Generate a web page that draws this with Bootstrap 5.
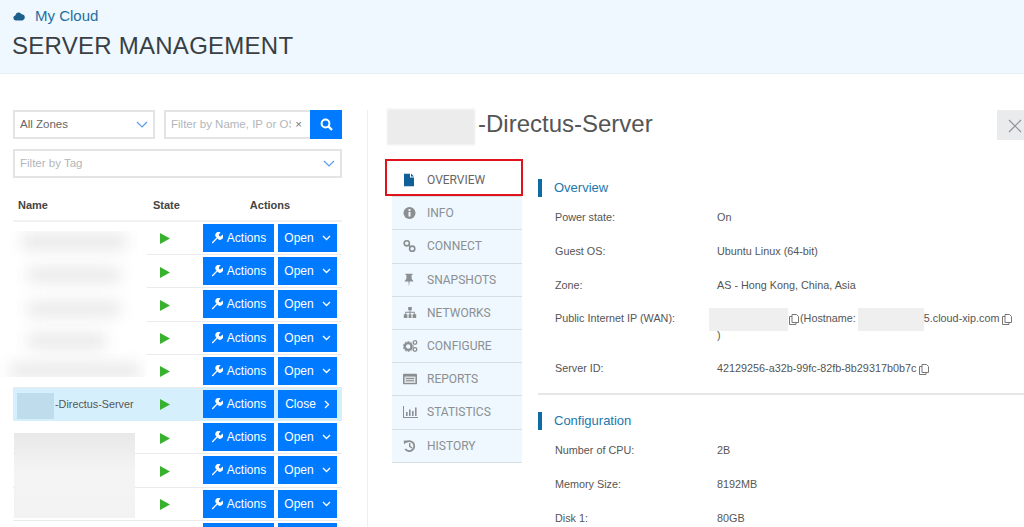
<!DOCTYPE html>
<html lang="en">
<head>
<meta charset="utf-8">
<title>Server Management</title>
<link href="https://cdn.jsdelivr.net/npm/bootstrap@5.3.0/dist/css/bootstrap.min.css" rel="stylesheet">
<style>
html,body{height:527px;overflow:hidden}
body{font-family:"Liberation Sans",Arial,sans-serif;color:#555;font-size:12px;background:#fff}
.hdr{height:74px;background:#eef8fe;border-bottom:1px solid #e6eef2;padding:7px 12px 0}
.hdr-link{color:#1f6fa3;font-size:15px;line-height:18px;gap:10px;padding-left:1px}
.hdr-title{font-size:24px;line-height:30px;margin:6px 0 0;color:#3a3f44;letter-spacing:.26px;font-weight:400}
.left-pane{width:329px;margin:36px 25px 0 13px;flex:none;position:relative}
.right-pane{flex:1;border-left:1px solid #eceeef;margin-top:36px;padding-left:24px;position:relative;min-width:0;height:420px}
.fld{height:29px;border:2px solid #e2e4e6;border-radius:0;font-size:11.5px;color:#666;padding:0 5px;background:#fff}
.fld.faint{color:#b2b6ba}
.zone-fld{width:142px}
.search-fld{width:146px;border-right:0;overflow:hidden;white-space:nowrap;padding-right:8px}
.search-text{overflow:hidden;flex:1}
.search-btn{width:32px;height:29px;border-radius:0;padding:0;background:#007bff;border:0}
.tag-fld{margin-top:10px;height:29px}
.tbl-head{height:35px;margin-top:9px;border-bottom:2px solid #f0f1f2;font-weight:700;font-size:11px;color:#444;padding:4px 5px 0 5px}
.tbl-head span:nth-child(1){width:135px}
.tbl-head span:nth-child(2){width:50px}
.tbl-head span:nth-child(3){width:134px;text-align:center}
.srv-row{height:33.2px;border-bottom:1px solid #e8eaeb;padding-right:5px}
.srv-row.on{background:#d5effd;border-bottom-color:#d5effd}
.srv-name{width:140px;padding-left:42px;font-size:10.8px;color:#555}
.state-cell{width:50px;padding-left:7px}
.act-btn,.open-btn{height:28px;border-radius:0;padding:0;background:#007bff;border:0;color:#fff;font-size:12px;font-family:"Liberation Sans",sans-serif;gap:4px}
.act-btn{width:71px;margin-right:4px}
.open-btn{width:59px;gap:8px}
.smudge{position:absolute;background:#fff;overflow:hidden}
.smudge i{position:absolute;display:block;background:#e2e2e2;filter:blur(8px)}
.smudge-a{left:-13px;top:121px;width:147px;height:146px}
.smudge-b{left:1px;top:323px;width:121px;height:85px;background:linear-gradient(#e8e8e8,#f4f4f4 45%,#f2f2f2)}
.smudge-c{left:4px;top:283px;width:37px;height:26px;background:#bfdcec}
.srv-title{font-size:24px;line-height:28px;height:28px;color:#555;margin:0 0 26px;padding-left:86px;font-weight:400}
.blur-title{left:-5px;top:-1px;width:88px;height:36px;background:#ececec;filter:blur(1px)}
.x-btn{position:absolute;right:-27px;top:0;width:54px;height:30px;background:#e9ebec;border:0;border-radius:0;padding:0 0 0 11px;text-align:left}
.side-list{width:130px;flex:none;margin-right:16px}
.side-item{height:33.2px;background:#eef8fe;border:0;border-bottom:1px solid #d8dfe3;border-radius:0;padding:0 0 0 35px;color:#8c8f92;font-size:12px;font-family:Roboto,"Liberation Sans",sans-serif;position:relative}
.side-item.active-item{background:#fff;color:#666}
.side-item svg{position:absolute;left:11px;top:50%;transform:translateY(-50%)}
.red-frame{position:absolute;left:-7px;top:-5px;width:138px;height:37px;border:2px solid #e0121c;pointer-events:none}
.sect-head{height:18px;border-left:4px solid #0f6ba5;padding-left:12px;color:#2178ad;font-size:13px;line-height:18px}
.info-row{display:flex;font-size:10.8px;color:#555;height:33.8px;padding-top:9px;line-height:17px}
.info-row.tall-row{height:50px}
.info-row>div:first-child{width:179px;padding-left:17px;flex:none}
.val{min-width:0;width:307px;white-space:nowrap}
.info-sep{border-top:2px solid #e4e6e7;margin:8px 0 17px}
.blank{display:inline-block;vertical-align:middle;background:#efefef;height:23px;margin-top:-4px;margin-bottom:-4px}
.blank-ip{width:79px;margin-left:-8px}
.blank-host{width:66px;margin-left:2px;margin-right:0}
.copy-a{margin-left:1px;margin-right:1px}
.copy-b{margin-left:3px}
.first-sect{margin-top:15px}
.sect-rows{padding-top:3px}
</style>
</head>
<body>
<header class="hdr">
  <div class="d-flex align-items-center hdr-link">
    <svg width="12" height="10" viewBox="0 0 12 10"><path fill="#1b5f8c" d="M3 9.5A2.6 2.6 0 0 1 2.3 4.4 3.4 3.4 0 0 1 8.6 3.2 3.2 3.2 0 0 1 9.4 9.5z"/></svg>
    <span>My Cloud</span>
  </div>
  <h1 class="hdr-title">SERVER MANAGEMENT</h1>
</header>
<main class="d-flex">
  <section class="left-pane">
    <div class="d-flex justify-content-between">
      <div class="fld zone-fld d-flex align-items-center justify-content-between">All Zones
        <svg width="12" height="7" viewBox="0 0 12 7"><path d="M1 1l5 5 5-5" fill="none" stroke="#5a9bf0" stroke-width="1.2"/></svg>
      </div>
      <div class="d-flex">
        <div class="fld faint search-fld d-flex align-items-center"><span class="search-text">Filter by Name, IP or OS</span><span class="text-secondary ms-1">×</span></div>
        <button class="btn search-btn d-flex align-items-center justify-content-center" aria-label="Search">
          <svg width="13" height="13" viewBox="0 0 13 13"><circle cx="5.5" cy="5.5" r="3.9" fill="none" stroke="#fff" stroke-width="2"/><path d="M8.5 8.5l3.5 3.5" stroke="#fff" stroke-width="2.4"/></svg>
        </button>
      </div>
    </div>
    <div class="fld faint tag-fld d-flex align-items-center justify-content-between">Filter by Tag
      <svg width="12" height="7" viewBox="0 0 12 7"><path d="M1 1l5 5 5-5" fill="none" stroke="#5a9bf0" stroke-width="1.2"/></svg>
    </div>
    <div class="tbl-head d-flex align-items-center"><span>Name</span><span>State</span><span>Actions</span></div>

    <div class="srv-row d-flex align-items-center"><div class="srv-name"></div><div class="state-cell"><svg width="10" height="11" viewBox="0 0 10 11"><path fill="#38b12f" d="M0 0l10 5.5L0 11z"/></svg></div><button class="btn act-btn d-inline-flex align-items-center justify-content-center"><svg width="12" height="12" viewBox="0 0 12 12"><path fill="#fff" d="M1 10.2 5.6 5.6A3.2 3.2 0 0 1 9.6.6L7.8 2.5l.3 1.6 1.6.3L11.4 2.6a3.2 3.2 0 0 1-5 4L1.9 11.2a.7.7 0 0 1-.9-1z"/></svg>Actions</button><button class="btn open-btn d-inline-flex align-items-center justify-content-center">Open<svg width="9" height="6" viewBox="0 0 9 6"><path d="M1 1l3.5 3.5L8 1" fill="none" stroke="#fff" stroke-width="1.3"/></svg></button></div>
    <div class="srv-row d-flex align-items-center"><div class="srv-name"></div><div class="state-cell"><svg width="10" height="11" viewBox="0 0 10 11"><path fill="#38b12f" d="M0 0l10 5.5L0 11z"/></svg></div><button class="btn act-btn d-inline-flex align-items-center justify-content-center"><svg width="12" height="12" viewBox="0 0 12 12"><path fill="#fff" d="M1 10.2 5.6 5.6A3.2 3.2 0 0 1 9.6.6L7.8 2.5l.3 1.6 1.6.3L11.4 2.6a3.2 3.2 0 0 1-5 4L1.9 11.2a.7.7 0 0 1-.9-1z"/></svg>Actions</button><button class="btn open-btn d-inline-flex align-items-center justify-content-center">Open<svg width="9" height="6" viewBox="0 0 9 6"><path d="M1 1l3.5 3.5L8 1" fill="none" stroke="#fff" stroke-width="1.3"/></svg></button></div>
    <div class="srv-row d-flex align-items-center"><div class="srv-name"></div><div class="state-cell"><svg width="10" height="11" viewBox="0 0 10 11"><path fill="#38b12f" d="M0 0l10 5.5L0 11z"/></svg></div><button class="btn act-btn d-inline-flex align-items-center justify-content-center"><svg width="12" height="12" viewBox="0 0 12 12"><path fill="#fff" d="M1 10.2 5.6 5.6A3.2 3.2 0 0 1 9.6.6L7.8 2.5l.3 1.6 1.6.3L11.4 2.6a3.2 3.2 0 0 1-5 4L1.9 11.2a.7.7 0 0 1-.9-1z"/></svg>Actions</button><button class="btn open-btn d-inline-flex align-items-center justify-content-center">Open<svg width="9" height="6" viewBox="0 0 9 6"><path d="M1 1l3.5 3.5L8 1" fill="none" stroke="#fff" stroke-width="1.3"/></svg></button></div>
    <div class="srv-row d-flex align-items-center"><div class="srv-name"></div><div class="state-cell"><svg width="10" height="11" viewBox="0 0 10 11"><path fill="#38b12f" d="M0 0l10 5.5L0 11z"/></svg></div><button class="btn act-btn d-inline-flex align-items-center justify-content-center"><svg width="12" height="12" viewBox="0 0 12 12"><path fill="#fff" d="M1 10.2 5.6 5.6A3.2 3.2 0 0 1 9.6.6L7.8 2.5l.3 1.6 1.6.3L11.4 2.6a3.2 3.2 0 0 1-5 4L1.9 11.2a.7.7 0 0 1-.9-1z"/></svg>Actions</button><button class="btn open-btn d-inline-flex align-items-center justify-content-center">Open<svg width="9" height="6" viewBox="0 0 9 6"><path d="M1 1l3.5 3.5L8 1" fill="none" stroke="#fff" stroke-width="1.3"/></svg></button></div>
    <div class="srv-row d-flex align-items-center"><div class="srv-name"></div><div class="state-cell"><svg width="10" height="11" viewBox="0 0 10 11"><path fill="#38b12f" d="M0 0l10 5.5L0 11z"/></svg></div><button class="btn act-btn d-inline-flex align-items-center justify-content-center"><svg width="12" height="12" viewBox="0 0 12 12"><path fill="#fff" d="M1 10.2 5.6 5.6A3.2 3.2 0 0 1 9.6.6L7.8 2.5l.3 1.6 1.6.3L11.4 2.6a3.2 3.2 0 0 1-5 4L1.9 11.2a.7.7 0 0 1-.9-1z"/></svg>Actions</button><button class="btn open-btn d-inline-flex align-items-center justify-content-center">Open<svg width="9" height="6" viewBox="0 0 9 6"><path d="M1 1l3.5 3.5L8 1" fill="none" stroke="#fff" stroke-width="1.3"/></svg></button></div>
    <div class="srv-row on d-flex align-items-center"><div class="srv-name">-Directus-Server</div><div class="state-cell"><svg width="10" height="11" viewBox="0 0 10 11"><path fill="#38b12f" d="M0 0l10 5.5L0 11z"/></svg></div><button class="btn act-btn d-inline-flex align-items-center justify-content-center"><svg width="12" height="12" viewBox="0 0 12 12"><path fill="#fff" d="M1 10.2 5.6 5.6A3.2 3.2 0 0 1 9.6.6L7.8 2.5l.3 1.6 1.6.3L11.4 2.6a3.2 3.2 0 0 1-5 4L1.9 11.2a.7.7 0 0 1-.9-1z"/></svg>Actions</button><button class="btn open-btn d-inline-flex align-items-center justify-content-center">Close<svg width="6" height="9" viewBox="0 0 6 9"><path d="M1 1l3.5 3.5L1 8" fill="none" stroke="#fff" stroke-width="1.3"/></svg></button></div>
    <div class="srv-row d-flex align-items-center"><div class="srv-name"></div><div class="state-cell"><svg width="10" height="11" viewBox="0 0 10 11"><path fill="#38b12f" d="M0 0l10 5.5L0 11z"/></svg></div><button class="btn act-btn d-inline-flex align-items-center justify-content-center"><svg width="12" height="12" viewBox="0 0 12 12"><path fill="#fff" d="M1 10.2 5.6 5.6A3.2 3.2 0 0 1 9.6.6L7.8 2.5l.3 1.6 1.6.3L11.4 2.6a3.2 3.2 0 0 1-5 4L1.9 11.2a.7.7 0 0 1-.9-1z"/></svg>Actions</button><button class="btn open-btn d-inline-flex align-items-center justify-content-center">Open<svg width="9" height="6" viewBox="0 0 9 6"><path d="M1 1l3.5 3.5L8 1" fill="none" stroke="#fff" stroke-width="1.3"/></svg></button></div>
    <div class="srv-row d-flex align-items-center"><div class="srv-name"></div><div class="state-cell"><svg width="10" height="11" viewBox="0 0 10 11"><path fill="#38b12f" d="M0 0l10 5.5L0 11z"/></svg></div><button class="btn act-btn d-inline-flex align-items-center justify-content-center"><svg width="12" height="12" viewBox="0 0 12 12"><path fill="#fff" d="M1 10.2 5.6 5.6A3.2 3.2 0 0 1 9.6.6L7.8 2.5l.3 1.6 1.6.3L11.4 2.6a3.2 3.2 0 0 1-5 4L1.9 11.2a.7.7 0 0 1-.9-1z"/></svg>Actions</button><button class="btn open-btn d-inline-flex align-items-center justify-content-center">Open<svg width="9" height="6" viewBox="0 0 9 6"><path d="M1 1l3.5 3.5L8 1" fill="none" stroke="#fff" stroke-width="1.3"/></svg></button></div>
    <div class="srv-row d-flex align-items-center"><div class="srv-name"></div><div class="state-cell"><svg width="10" height="11" viewBox="0 0 10 11"><path fill="#38b12f" d="M0 0l10 5.5L0 11z"/></svg></div><button class="btn act-btn d-inline-flex align-items-center justify-content-center"><svg width="12" height="12" viewBox="0 0 12 12"><path fill="#fff" d="M1 10.2 5.6 5.6A3.2 3.2 0 0 1 9.6.6L7.8 2.5l.3 1.6 1.6.3L11.4 2.6a3.2 3.2 0 0 1-5 4L1.9 11.2a.7.7 0 0 1-.9-1z"/></svg>Actions</button><button class="btn open-btn d-inline-flex align-items-center justify-content-center">Open<svg width="9" height="6" viewBox="0 0 9 6"><path d="M1 1l3.5 3.5L8 1" fill="none" stroke="#fff" stroke-width="1.3"/></svg></button></div>
    <div class="srv-row d-flex align-items-center"><div class="srv-name"></div><div class="state-cell"></div><button class="btn act-btn" aria-label="Actions"></button><button class="btn open-btn" aria-label="Open"></button></div>

    <div class="smudge smudge-a"><i style="left:22px;top:4px;width:104px;height:13px"></i><i style="left:28px;top:38px;width:92px;height:12px"></i><i style="left:28px;top:72px;width:92px;height:12px"></i><i style="left:28px;top:104px;width:78px;height:12px"></i><i style="left:10px;top:134px;width:130px;height:12px"></i></div>
    <div class="smudge smudge-b"></div>
    <div class="smudge smudge-c"></div>
  </section>

  <section class="right-pane">
    <h2 class="srv-title position-relative"><span class="position-absolute blur-title"></span>-Directus-Server</h2>
    <button class="btn x-btn" aria-label="Close"><svg width="14" height="14" viewBox="0 0 14 14"><path d="M1 1l12 12M13 1L1 13" stroke="#8d9397" stroke-width="1.2" fill="none"/></svg></button>
    <div class="d-flex">
      <nav class="list-group side-list position-relative">
        <a class="list-group-item side-item active-item d-flex align-items-center"><svg width="12" height="13" viewBox="0 0 12 13"><path fill="#0f5f98" d="M1 0h6v4h4v9H1zM8 0l3 3H8z"/></svg>OVERVIEW</a>
        <a class="list-group-item side-item d-flex align-items-center"><svg width="13" height="13" viewBox="0 0 13 13"><circle cx="6.5" cy="6.5" r="6" fill="#8c8f92"/><rect x="5.5" y="5.5" width="2" height="4.5" fill="#eef8fe"/><rect x="5.5" y="2.6" width="2" height="2" fill="#eef8fe"/></svg>INFO</a>
        <a class="list-group-item side-item d-flex align-items-center"><svg width="13" height="13" viewBox="0 0 13 13"><circle cx="3.8" cy="3.8" r="2.6" fill="none" stroke="#8c8f92" stroke-width="1.6"/><circle cx="9.2" cy="9.2" r="2.6" fill="none" stroke="#8c8f92" stroke-width="1.6"/><path d="M5.5 5.5l2 2" stroke="#8c8f92" stroke-width="1.6"/></svg>CONNECT</a>
        <a class="list-group-item side-item d-flex align-items-center"><svg width="12" height="13" viewBox="0 0 12 13"><path fill="#8c8f92" d="M2.5 0h7v1.4H8.6V5.2L10.6 8H6.6L6 13 5.4 8H1.4L3.4 5.2V1.4H2.5z"/></svg>SNAPSHOTS</a>
        <a class="list-group-item side-item d-flex align-items-center"><svg width="14" height="12" viewBox="0 0 14 12"><path fill="#8c8f92" d="M5.2 0h3.6v3.2H7.5v1.6h4.3v2.4h1.4V11H9.6V7.2h1.2V5.8H7.5v1.4h.9V11H5.6V7.2h.9V5.8H3.2v1.4h1.2V11H.8V7.2h1.4V4.8h4.3V3.2H5.2z"/></svg>NETWORKS</a>
        <a class="list-group-item side-item d-flex align-items-center"><svg width="15" height="13" viewBox="0 0 15 13"><circle cx="5.2" cy="7" r="3.4" fill="none" stroke="#8c8f92" stroke-width="2.4"/><circle cx="5.2" cy="7" r="5" fill="none" stroke="#8c8f92" stroke-width="1" stroke-dasharray="1.6 1.6"/><circle cx="12" cy="3" r="1.8" fill="none" stroke="#8c8f92" stroke-width="1.3"/><circle cx="12" cy="10" r="1.8" fill="none" stroke="#8c8f92" stroke-width="1.3"/></svg>CONFIGURE</a>
        <a class="list-group-item side-item d-flex align-items-center"><svg width="14" height="11" viewBox="0 0 14 11"><rect width="14" height="11" rx="1" fill="#8c8f92"/><rect x="1.5" y="3" width="11" height="6.5" fill="#d9dfe2"/><path d="M3 5h8M3 7.2h8" stroke="#8c8f92"/></svg>REPORTS</a>
        <a class="list-group-item side-item d-flex align-items-center"><svg width="15" height="12" viewBox="0 0 15 12"><path fill="#8c8f92" d="M0 0h1v11h14v1H0zM3 6h1.6v4H3zM6 3.5h1.6V10H6zM9 5h1.6v5H9zM12 1.5h1.6V10H12z"/></svg>STATISTICS</a>
        <a class="list-group-item side-item d-flex align-items-center"><svg width="13" height="13" viewBox="0 0 13 13"><path d="M3 2.8A5 5 0 1 1 2.2 9.5" fill="none" stroke="#8c8f92" stroke-width="1.8"/><path fill="#8c8f92" d="M.8 1l4 .2L1 5zM6 3.5h1.4v3l2 1.4-.7 1L6 7.2z"/></svg>HISTORY</a>
        <div class="red-frame"></div>
      </nav>
      <div class="flex-grow-1 first-sect">
        <div class="sect-head">Overview</div>
        <div class="sect-rows">
          <div class="info-row"><div>Power state:</div><div class="val">On</div></div>
          <div class="info-row"><div>Guest OS:</div><div class="val">Ubuntu Linux (64-bit)</div></div>
          <div class="info-row"><div>Zone:</div><div class="val">AS - Hong Kong, China, Asia</div></div>
          <div class="info-row tall-row"><div>Public Internet IP (WAN):</div><div class="val"><span class="blank blank-ip"></span><svg class="copy-a" width="10" height="11" viewBox="0 0 10 11"><path d="M3 .5h4.5l2 2v6H3zM3 2.5H.5v8H7V8.5" fill="none" stroke="#777"/></svg>(Hostname:<span class="blank blank-host"></span>5.cloud-xip.com<svg class="copy-b" width="10" height="11" viewBox="0 0 10 11"><path d="M3 .5h4.5l2 2v6H3zM3 2.5H.5v8H7V8.5" fill="none" stroke="#777"/></svg><br>)</div></div>
          <div class="info-row"><div>Server ID:</div><div class="val">42129256-a32b-99fc-82fb-8b29317b0b7c <svg width="10" height="11" viewBox="0 0 10 11"><path d="M3 .5h4.5l2 2v6H3zM3 2.5H.5v8H7V8.5" fill="none" stroke="#777"/></svg></div></div>
        </div>
        <div class="info-sep"></div>
        <div class="sect-head">Configuration</div>
        <div class="sect-rows">
          <div class="info-row"><div>Number of CPU:</div><div class="val">2B</div></div>
          <div class="info-row"><div>Memory Size:</div><div class="val">8192MB</div></div>
          <div class="info-row"><div>Disk 1:</div><div class="val">80GB</div></div>
        </div>
      </div>
    </div>
  </section>
</main>
</body>
</html>
